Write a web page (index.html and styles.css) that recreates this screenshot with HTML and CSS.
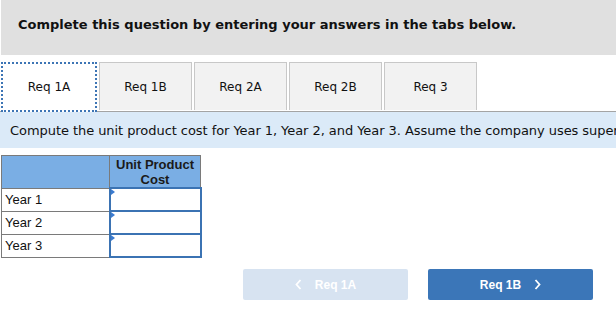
FILE: index.html
```html
<!DOCTYPE html>
<html lang="en">
<head>
  <meta charset="UTF-8">
  <title>Req 1A</title>
  <link rel="stylesheet" href="styles.css">
</head>
<body>

<div class="prompt">Complete this question by entering your answers in the tabs below.</div>

<div class="tabs">
  <div class="tab active">Req 1A</div>
  <div class="tab">Req 1B</div>
  <div class="tab">Req 2A</div>
  <div class="tab">Req 2B</div>
  <div class="tab">Req 3</div>
</div>

<div class="instructions">Compute the unit product cost for Year 1, Year 2, and Year 3. Assume the company uses super-variable costing.</div>

<table class="answers">
  <thead>
  <tr>
    <th class="blank"></th>
    <th>Unit Product<br>Cost</th>
  </tr>
  </thead>
  <tbody>
  <tr>
    <td class="label">Year 1</td>
    <td class="entry"><span class="flag"></span></td>
  </tr>
  <tr>
    <td class="label">Year 2</td>
    <td class="entry"><span class="flag"></span></td>
  </tr>
  <tr>
    <td class="label">Year 3</td>
    <td class="entry"><span class="flag"></span></td>
  </tr>
  </tbody>
</table>

<div class="nav">
  <button class="btn prev">
    <svg class="chev" width="7" height="11" viewBox="0 0 7 11"><path d="M5.5 1 L1.5 5.5 L5.5 10" fill="none" stroke="white" stroke-width="1.8"/></svg>
    Req 1A
  </button>
  <button class="btn next">
    Req 1B
    <svg class="chev" width="7" height="11" viewBox="0 0 7 11"><path d="M1.5 1 L5.5 5.5 L1.5 10" fill="none" stroke="white" stroke-width="1.8"/></svg>
  </button>
</div>

</body>
</html>
```

FILE: styles.css
```css
body {
  margin: 0;
  width: 616px;
  background: white;
  font-family: "DejaVu Sans", Verdana, sans-serif;
  color: #111;
  overflow: hidden;
}
.prompt {
  margin-left: 1px;
  height: 55px;
  box-sizing: border-box;
  padding: 17px 0 0 17px;
  background: #e0e0e0;
  font-size: 13px;
  font-weight: bold;
}
.tabs {
  display: flex;
  gap: 2px;
  margin-top: 7px;
  padding-left: 1px;
  border-bottom: 1px solid #a4a4a4;
}
.tab {
  width: 93px;
  height: 48px;
  box-sizing: border-box;
  display: flex;
  align-items: center;
  justify-content: center;
  background: #f2f2f2;
  border: 1px solid #c8c8c8;
  border-bottom: none;
  font-size: 12px;
}
.tab.active {
  width: 96px;
  height: 50px;
  margin-bottom: -1px;
  position: relative;
  background: white;
  border: 2px dotted #3d75b5;
}
.instructions {
  height: 36px;
  box-sizing: border-box;
  padding: 11px 0 0 10px;
  background: #dbeaf8;
  font-size: 13px;
  letter-spacing: -0.06px;
  white-space: nowrap;
  overflow: hidden;
}
.answers {
  margin: 7px 0 0 1px;
  border-collapse: collapse;
  font-family: "Liberation Sans", Arial, sans-serif;
  font-size: 13px;
}
.answers th {
  height: 31px;
  padding: 0;
  background: #7aaee4;
  border: 1px solid #7a7a7a;
  font-weight: bold;
  line-height: 15px;
  color: #1a1a1a;
}
.answers th.blank {
  width: 107px;
}
.answers td {
  height: 21px;
  padding: 0;
  border: 1px solid #7a7a7a;
}
.answers td.label {
  padding-left: 3px;
}
.answers td.entry {
  width: 89px;
  position: relative;
  border: 2px solid #3b73b3;
}
.flag {
  position: absolute;
  top: 0;
  left: 0;
  border-top: 3px solid transparent;
  border-bottom: 3px solid transparent;
  border-left: 4px solid #3b7bd0;
}
.nav {
  display: flex;
  gap: 20px;
  margin: 11px 0 0 243px;
}
.btn {
  width: 165px;
  height: 31px;
  border: none;
  border-radius: 2px;
  color: white;
  font-family: "Liberation Sans", Arial, sans-serif;
  font-size: 12px;
  font-weight: bold;
  display: flex;
  align-items: center;
  justify-content: center;
  gap: 13px;
}
.btn.prev {
  background: #d7e3f1;
}
.btn.next {
  background: #3b76b8;
}
```
